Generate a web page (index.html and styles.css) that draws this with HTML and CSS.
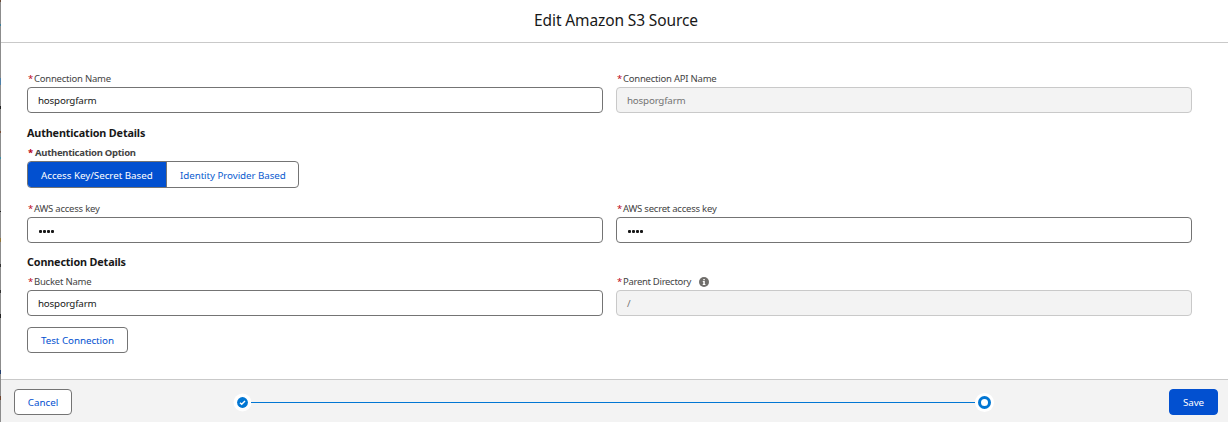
FILE: index.html
```html
<!DOCTYPE html>
<html lang="en">
<head>
<meta charset="utf-8">
<title>Edit Amazon S3 Source</title>
<link rel="stylesheet" href="styles.css">
</head>
<body>
<div class="modal">
  <header class="modal-header"><h1 class="title">Edit Amazon S3 Source</h1></header>
  <main class="content">
    <div class="row">
      <div class="field">
        <div class="label"><span class="req">*</span><span>Connection Name</span></div>
        <div class="input"><span>hosporgfarm</span></div>
      </div>
      <div class="field">
        <div class="label"><span class="req">*</span><span>Connection API Name</span></div>
        <div class="input disabled"><span>hosporgfarm</span></div>
      </div>
    </div>
    <h2 class="heading auth-heading">Authentication Details</h2>
    <div class="label bold"><span class="req">*</span><span>Authentication Option</span></div>
    <div class="group">
      <div class="segment active"><span>Access Key/Secret Based</span></div>
      <div class="segment"><span>Identity Provider Based</span></div>
    </div>
    <div class="row keys">
      <div class="field">
        <div class="label"><span class="req">*</span><span>AWS access key</span></div>
        <div class="input"><span class="dots"><i></i><i></i><i></i><i></i></span></div>
      </div>
      <div class="field">
        <div class="label"><span class="req">*</span><span>AWS secret access key</span></div>
        <div class="input"><span class="dots"><i></i><i></i><i></i><i></i></span></div>
      </div>
    </div>
    <h2 class="heading conn-heading">Connection Details</h2>
    <div class="row">
      <div class="field">
        <div class="label"><span class="req">*</span><span>Bucket Name</span></div>
        <div class="input"><span>hosporgfarm</span></div>
      </div>
      <div class="field">
        <div class="label"><span class="req">*</span><span class="parent">Parent Directory</span>
          <svg class="info" viewBox="0 0 10 10"><circle cx="5" cy="5" r="5" fill="#706e6b"/><path d="M4.3 2h1.5v1.2H4.3zM3.8 4h2v3h.6v.9H3.7V7h.6V4.9h-.5z" fill="#fff"/></svg>
        </div>
        <div class="input disabled"><span>/</span></div>
      </div>
    </div>
    <button class="btn test">Test Connection</button>
  </main>
  <footer class="footer">
    <button class="btn cancel">Cancel</button>
    <div class="progress">
      <svg class="marker" viewBox="0 0 18 18"><circle cx="9.5" cy="9.5" r="9" fill="#fff"/><circle cx="9.5" cy="9.5" r="5.4" fill="#0176d3"/><path d="M7 9.7 8.7 11.3 12 7.9" fill="none" stroke="#fff" stroke-width="1.4"/></svg>
      <div class="line"></div>
      <svg class="marker" viewBox="0 0 18 18"><circle cx="9.5" cy="9.5" r="9.5" fill="#fff"/><circle cx="9.5" cy="9.5" r="5" fill="none" stroke="#0176d3" stroke-width="3"/></svg>
    </div>
    <button class="btn save">Save</button>
  </footer>
</div>
</body>
</html>
```
FILE: styles.css
```css
* { box-sizing: border-box; }
body { margin: 0; background: #fff; font-family: "Noto Sans", "Open Sans", sans-serif; font-size: 9.8px; color: #181818; }
span { white-space: nowrap; }
.modal {
  height: 422px; display: flex; flex-direction: column; padding-left: 1px;
  background:
    linear-gradient(#6b4a35, #6b4a35) 0 0 / 1px 2px no-repeat,
    linear-gradient(#3d7f99, #3d7f99) 0 24px / 1px 2px no-repeat,
    linear-gradient(#4d7fa8, #4d7fa8) 0 78px / 1px 7px no-repeat,
    linear-gradient(#222, #222) 0 106px / 1px 3px no-repeat,
    linear-gradient(#7a5038, #7a5038) 0 131px / 1px 2px no-repeat,
    linear-gradient(#3d8fa8, #3d8fa8) 0 157px / 1px 2px no-repeat,
    linear-gradient(#222, #222) 0 211px / 1px 1px no-repeat,
    linear-gradient(#94783a, #94783a) 0 238px / 1px 4px no-repeat,
    linear-gradient(#333, #333) 0 264px / 1px 3px no-repeat,
    linear-gradient(#333, #333) 0 290px / 1px 3px no-repeat,
    linear-gradient(#222, #222) 0 314px / 1px 4px no-repeat,
    linear-gradient(#25406e, #25406e) 0 370px / 1px 4px no-repeat,
    linear-gradient(#70452f, #70452f) 0 396px / 1px 4px no-repeat,
    linear-gradient(#8c8c8c, #8c8c8c) 0 0 / 1px 100% no-repeat;
}
.modal-header { height: 43px; border-bottom: 1px solid #c9c9c9; display: flex; justify-content: center; padding-top: 8px; padding-left: 3px; }
.title { margin: 0; font-size: 15.5px; font-weight: 400; line-height: 24px; letter-spacing: -0.12px; }
.content { height: 336px; padding: 28px 36px 0 26px; }
.row { display: grid; grid-template-columns: 576px 576px; column-gap: 13px; }
.label { display: flex; height: 16px; line-height: 16px; padding-left: 1px; color: #444; font-size: 9.5px; letter-spacing: -0.22px; }
.parent { letter-spacing: -0.3px; }
.req { width: 6px; color: #ba0517; }
.bold { font-weight: 700; letter-spacing: -0.28px; }
.bold .req { width: 7px; }
.input { height: 26px; border: 1px solid #747474; border-radius: 4px; padding: 1px 0 0 10px; display: flex; align-items: center; line-height: 24px; letter-spacing: -0.2px; }
.disabled { background: #f3f3f3; border-color: #c9c9c9; color: #747474; }
.dots { display: flex; gap: 1px; padding: 1px 0 0 1px; }
.dots i { width: 3px; height: 3px; border-radius: 1px; background: #181818; }
.heading { margin: 0; height: 16px; line-height: 16px; font-size: 10.8px; font-weight: 700; letter-spacing: -0.15px; }
.auth-heading { margin-top: 12px; margin-bottom: 4px; }
.conn-heading { margin-top: 11px; margin-bottom: 4px; }
.group { width: 272px; height: 27px; display: flex; border: 1px solid #747474; border-radius: 4px; overflow: hidden; }
.segment { flex: 1; display: flex; align-items: center; padding-left: 13px; padding-top: 2px; color: #0b5cd0; letter-spacing: -0.07px; }
.active { flex: 0 0 139px; background: #0250d0; color: #fff; border-right: 1px solid #747474; letter-spacing: -0.03px; }
.keys { margin-top: 13px; }
.info { width: 10px; height: 10px; margin: 3px 0 0 8px; }
.btn { height: 26px; padding: 1px 0 0; border: 1px solid #747474; border-radius: 4px; background: #fff; color: #0250d0; font: inherit; letter-spacing: -0.04px; display: flex; align-items: center; justify-content: center; }
.test { width: 101px; margin-top: 11px; }
.footer { height: 43px; background: #f3f3f3; border-top: 1px solid #c9c9c9; display: flex; align-items: center; justify-content: space-between; padding: 2px 10px 0 13px; }
.cancel { width: 58px; }
.save { width: 49px; background: #0250d0; border-color: #0250d0; color: #fff; }
.progress { display: flex; align-items: center; width: 760px; margin-right: 15px; }
.marker { width: 18px; height: 18px; flex: none; overflow: visible; }
.line { flex: 1; height: 1px; background: #0176d3; }
```
